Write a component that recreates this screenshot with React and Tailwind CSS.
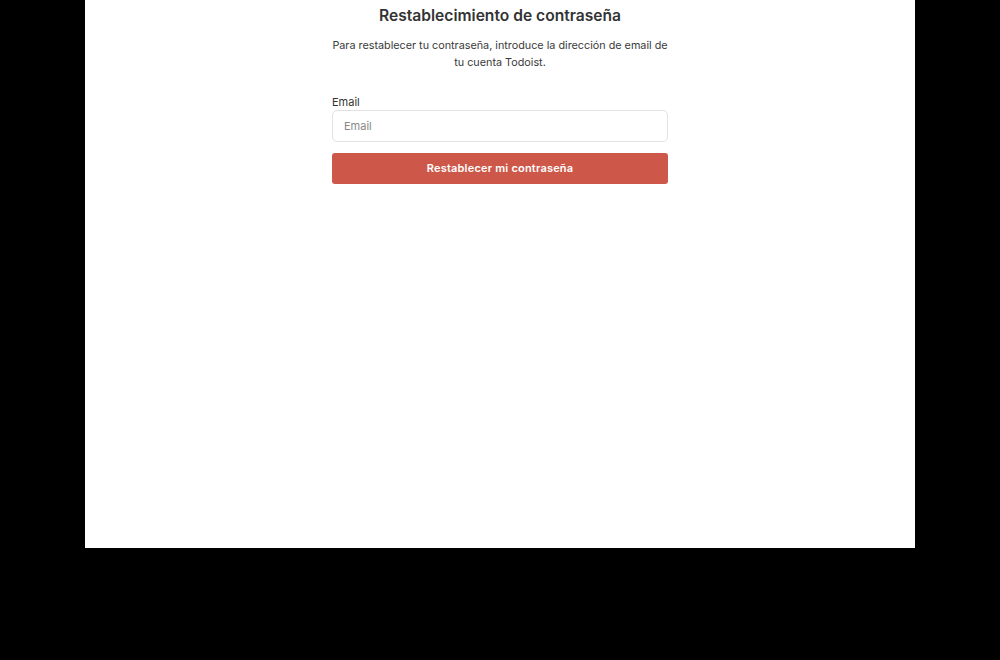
export default function App() {
  return (
    <div className="w-[1000px] h-[660px] bg-black flex items-start justify-center" style={{ fontFamily: "Inter, 'Noto Sans', sans-serif" }}>
      <div className="w-[830px] h-[548px] bg-white flex flex-col items-center">
        <h1 className="mt-[6px] text-[15.6px] leading-[20px] font-semibold text-[#333]">Restablecimiento de contraseña</h1>
        <p className="mt-[11px] w-[340px] text-center text-[10.8px] leading-[17px] text-[#3a3a3a]">
          Para restablecer tu contraseña, introduce la dirección de email de tu cuenta Todoist.
        </p>
        <div className="mt-[23px] w-[336px] flex flex-col">
          <label className="text-[11px] leading-[16px] text-[#333]">Email</label>
          <input
            placeholder="Email"
            className="h-[32px] w-full rounded-[5px] border border-[#e2e2e2] px-[11px] text-[11px] text-[#333] placeholder:text-[#888] outline-none"
          />
          <button className="mt-[11px] h-[31px] w-full rounded-[3px] bg-[#cd5849] text-white text-[11px] font-semibold tracking-[0.2px]">
            Restablecer mi contraseña
          </button>
        </div>
      </div>
    </div>
  );
}
